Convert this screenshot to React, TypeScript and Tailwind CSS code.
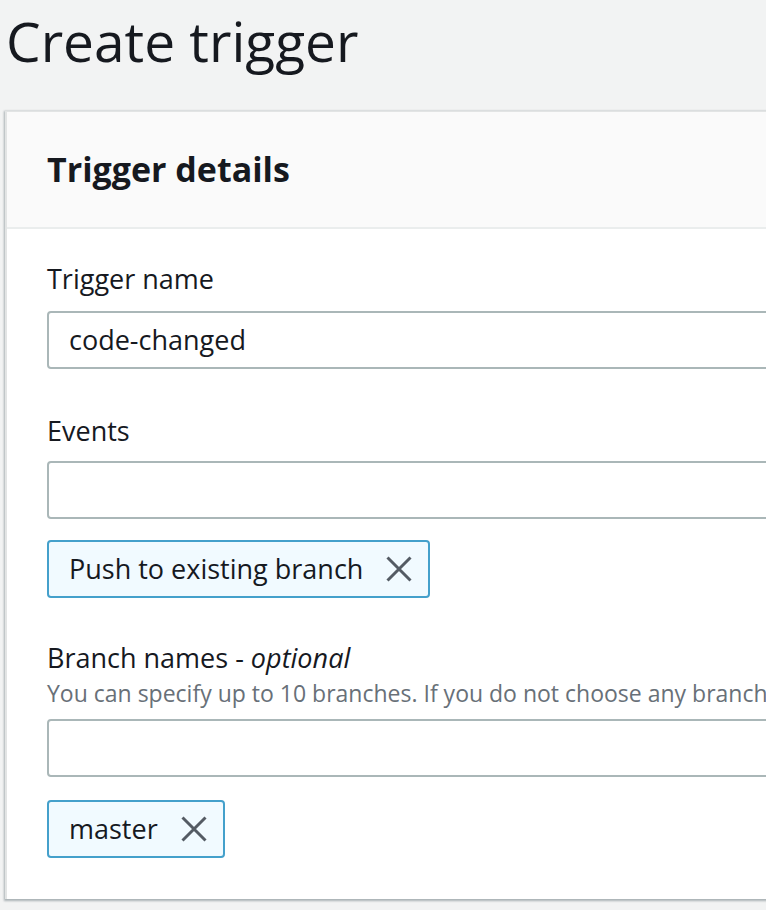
function Token({ label }: { label: string }) {
  return (
    <div className="inline-flex h-[58px] items-center rounded-[4px] border-2 border-[#44a0cb] bg-[#f1faff] pl-[20px] pr-[16px]">
      <span className="text-[27px] text-[#16191f]">{label}</span>
      <svg className="ml-[23px] h-[26px] w-[26px]" viewBox="0 0 26 26" fill="none">
        <path d="M1.5 1.5 24.5 24.5M24.5 1.5 1.5 24.5" stroke="#545b64" strokeWidth="3" />
      </svg>
    </div>
  );
}

function Field({ value }: { value?: string }) {
  return (
    <div className="flex h-[58px] items-center rounded-[4px] border-2 border-[#aab7b8] bg-white px-[20px] text-[27px] text-[#16191f]">
      {value}
    </div>
  );
}

export default function App() {
  return (
    <div
      className="h-[910px] w-[766px] overflow-hidden bg-[#f2f3f3]"
      style={{ fontFamily: '"Open Sans", "Noto Sans", sans-serif' }}
    >
      <h1 className="ml-[6px] pt-[3px] text-[55px] leading-[76px] text-[#16191f]">Create trigger</h1>

      <div className="ml-[5px] mt-[32px] w-[900px] border-l-2 border-t border-[#e2e4e4] bg-white shadow-[0_1px_2px_1px_rgba(0,28,36,0.3)]">
        <div className="flex h-[117px] items-center border-b-2 border-[#eaeded] bg-[#fafafa] px-[40px]">
          <h2 className="text-[34px] font-bold text-[#16191f]">Trigger details</h2>
        </div>

        <div className="px-[40px] pb-[41px] pt-[30px]">
          <label className="block text-[27px] leading-[40px] text-[#16191f]">Trigger name</label>
          <div className="mt-[12px]">
            <Field value="code-changed" />
          </div>

          <label className="mt-[42px] block text-[27px] leading-[40px] text-[#16191f]">Events</label>
          <div className="mt-[10px]">
            <Field />
          </div>
          <div className="mt-[21px]">
            <Token label="Push to existing branch" />
          </div>

          <label className="mt-[40px] block text-[27px] leading-[40px] text-[#16191f]">
            Branch names - <i>optional</i>
          </label>
          <p className="whitespace-nowrap text-[23px] leading-[30px] text-[#687078]">
            You can specify up to 10 branches. If you do not choose any branches, the trigger applies to all branches.
          </p>
          <div className="mt-[11px]">
            <Field />
          </div>
          <div className="mt-[23px]">
            <Token label="master" />
          </div>
        </div>
      </div>
    </div>
  );
}
